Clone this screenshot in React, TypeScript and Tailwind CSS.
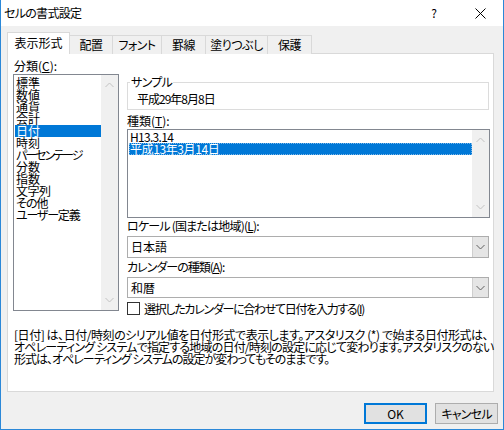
import React from "react";

const Chevron = ({ up = false, color = "#a0a0a0" }: { up?: boolean; color?: string }) => (
  <svg width="9" height="6" viewBox="0 0 9 6">
    <polyline
      points={up ? "0.5,5 4.5,1 8.5,5" : "0.5,1 4.5,5 8.5,1"}
      fill="none"
      stroke={color}
      strokeWidth="1"
    />
  </svg>
);

const ScrollBar = () => (
  <div className="w-[17px] h-full bg-[#f0f0f0] flex flex-col items-center justify-between py-[7px]">
    <Chevron up color="#c2c2c2" />
    <Chevron color="#c2c2c2" />
  </div>
);

export default function App() {
  const categories = [
    { t: "標準", k: "" },
    { t: "数値", k: "" },
    { t: "通貨", k: "" },
    { t: "会計", k: "" },
    { t: "日付", k: "" },
    { t: "時刻", k: "" },
    { t: "パーセンテージ", k: "tracking-[-2px]" },
    { t: "分数", k: "" },
    { t: "指数", k: "" },
    { t: "文字列", k: "tracking-[-0.5px]" },
    { t: "その他", k: "tracking-[-1px]" },
    { t: "ユーザー定義", k: "tracking-[-1.2px]" },
  ];
  const tabs = [
    { label: "配置", w: "w-[44px]" },
    { label: "フォント", w: "w-[50px]" },
    { label: "罫線", w: "w-[45px]" },
    { label: "塗りつぶし", w: "w-[63px]" },
    { label: "保護", w: "w-[45px]" },
  ];
  return (
    <div className="w-[504px] h-[430px] flex flex-col bg-[#f0f0f0] border-x border-b border-[#2b88d8] text-[12px] text-black [font-family:'Noto_Sans_CJK_JP',sans-serif] [font-feature-settings:'palt'] overflow-hidden">
      {/* title bar */}
      <div className="h-[26px] bg-white flex items-center shrink-0">
        <div className="pl-[3px] leading-[14px] tracking-[-0.7px]">セルの書式設定</div>
        <div className="ml-auto flex items-center">
          <div className="w-[14px] text-center leading-[14px] mr-[34px]">?</div>
          <svg width="11" height="11" viewBox="0 0 11 11" className="mr-[17px]">
            <line x1="0.5" y1="0.5" x2="10.5" y2="10.5" stroke="#000" strokeWidth="1" />
            <line x1="10.5" y1="0.5" x2="0.5" y2="10.5" stroke="#000" strokeWidth="1" />
          </svg>
        </div>
      </div>

      {/* body */}
      <div className="flex flex-col pl-[6px] pt-[6px]">
        {/* tabs */}
        <div className="flex items-end h-[22px] relative z-10 -mb-px">
          <div className="w-[63px] h-[22px] bg-white border border-b-0 border-[#d9d9d9] flex items-center justify-center leading-[14px] pb-[1px]">
            表示形式
          </div>
          {tabs.map((t) => (
            <div
              key={t.label}
              className={`${t.w} h-[19px] -ml-px bg-[#f0f0f0] border border-b-0 border-[#d9d9d9] flex items-center justify-center leading-[14px] tracking-[-0.5px]`}
            >
              {t.label}
            </div>
          ))}
        </div>

        {/* panel */}
        <div className="w-[487px] h-[339px] bg-white border border-[#d9d9d9] flex flex-col pl-[5px] pt-[5px]">
          <div className="flex">
            {/* left column */}
            <div className="w-[106px] flex flex-col">
              <div className="pl-[1px] leading-[13px] h-[13px]">
                分類(<u>C</u>):
              </div>
              <div className="mt-[2px] h-[237px] border border-[#828790] flex">
                <div className="flex-1 pt-[2px] pl-[1px]">
                  {categories.map((c) => (
                    <div
                      key={c.t}
                      className={`h-[12px] leading-[12px] pl-[1px] whitespace-nowrap ${c.k} ${
                        c.t === "日付" ? "bg-[#0078d7] text-white" : ""
                      }`}
                    >
                      {c.t}
                    </div>
                  ))}
                </div>
                <ScrollBar />
              </div>
            </div>

            {/* right column */}
            <div className="ml-[8px] w-[363px] flex flex-col pt-[17px]">
              <fieldset className="border border-[#dcdcdc] pl-[2px] w-[362px] h-[34px]">
                <legend className="px-[1px] leading-[12px] tracking-[-0.7px]">サンプル</legend>
                <div className="pl-[7px] pt-[5px] leading-[12px] tracking-[-1px]">平成29年8月8日</div>
              </fieldset>

              <div className="mt-[5px] leading-[12px] h-[12px]">
                種類(<u>T</u>):
              </div>
              <div className="mt-[2px] h-[89px] border border-[#828790] flex">
                <div className="flex-1 pt-[1px] pl-[1px]">
                  <div className="h-[12px] leading-[12px] pl-[1px] tracking-[-0.7px]">H13.3.14</div>
                  <div className="h-[12px] leading-[12px] pl-[1px] tracking-[-0.4px] bg-[#0078d7] text-white outline outline-1 outline-dotted outline-offset-[-1px] outline-[#7fb8e8]">
                    平成13年3月14日
                  </div>
                </div>
                <ScrollBar />
              </div>

              <div className="mt-[1px] leading-[14px] h-[14px] tracking-[-0.8px] whitespace-nowrap">
                ロケール (国または地域)(<u>L</u>):
              </div>
              <div className="mt-[3px]">
                <div className="h-[22px] w-[362px] border border-[#adadad] bg-white flex">
                  <div className="flex-1 pl-[3px] leading-[20px]">日本語</div>
                  <div className="w-[16px] h-full bg-[#e5e5e5] border-l border-[#cfcfcf] flex items-center justify-center">
                    <Chevron color="#606060" />
                  </div>
                </div>
              </div>

              <div className="mt-[2px] leading-[14px] h-[14px] tracking-[-1px] whitespace-nowrap">
                カレンダーの種類(<u>A</u>):
              </div>
              <div className="mt-[3px]">
                <div className="h-[21px] w-[362px] border border-[#adadad] bg-white flex">
                  <div className="flex-1 pl-[3px] leading-[19px]">和暦</div>
                  <div className="w-[16px] h-full bg-[#e5e5e5] border-l border-[#cfcfcf] flex items-center justify-center">
                    <Chevron color="#606060" />
                  </div>
                </div>
              </div>

              <div className="mt-[4px] flex items-center h-[13px]">
                <div className="w-[13px] h-[13px] border border-[#333333] bg-white shrink-0" />
                <div className="ml-[4px] leading-[13px] whitespace-nowrap tracking-[-1.3px]">
                  選択したカレンダーに合わせて日付を入力する(<u>I</u>)
                </div>
              </div>
            </div>
          </div>

          {/* description */}
          <div className="mt-[14px] pl-[1px] leading-[12px]">
            <div className="whitespace-nowrap tracking-[-0.45px]">
              [日付] は、日付/時刻のシリアル値を日付形式で表示します。アスタリスク (*) で始まる日付形式は、
            </div>
            <div className="whitespace-nowrap tracking-[-0.8px]">
              オペレーティング システムで指定する地域の日付/時刻の設定に応じて変わります。アスタリスクのない
            </div>
            <div className="whitespace-nowrap tracking-[-1px]">
              形式は、オペレーティング システムの設定が変わってもそのままです。
            </div>
          </div>
        </div>

        {/* buttons */}
        <div className="flex justify-end pr-[5px] mt-[11px] gap-[8px]">
          <div className="w-[63px] h-[21px] border-2 border-[#0078d7] bg-[#e1e1e1] flex items-center justify-center leading-[14px]">
            OK
          </div>
          <div className="w-[63px] h-[21px] border border-[#adadad] bg-[#e1e1e1] flex items-center justify-center leading-[14px] tracking-[-0.8px]">
            キャンセル
          </div>
        </div>
      </div>
    </div>
  );
}
